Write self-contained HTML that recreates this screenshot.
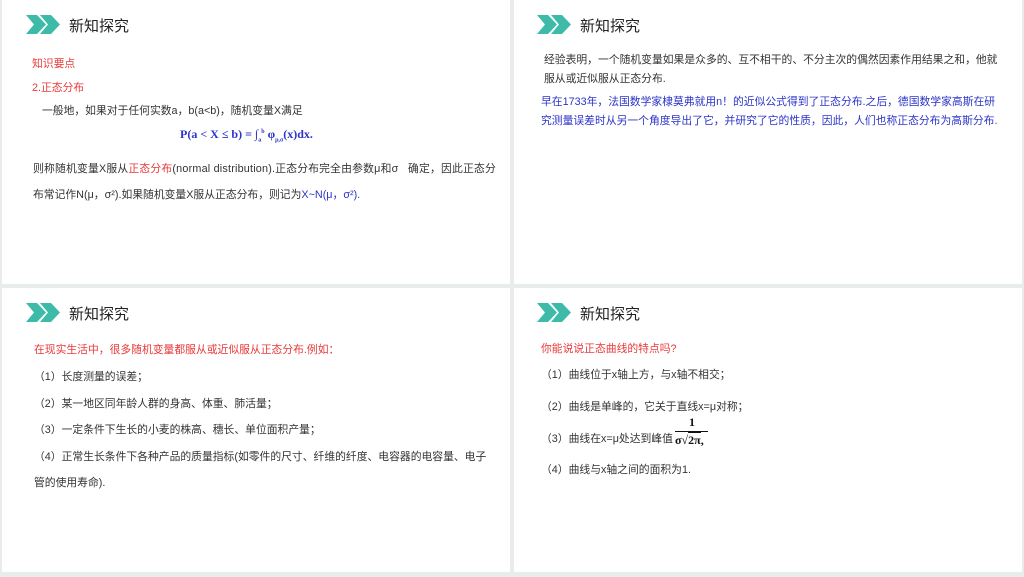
<!DOCTYPE html>
<html><head><meta charset="utf-8"><style>
body{margin:0;width:1024px;height:577px;background:#e9eced;position:relative;overflow:hidden;font-family:"Liberation Sans","Noto Sans CJK SC",sans-serif;}
.p{position:absolute;background:#fff;}
.t{position:absolute;white-space:nowrap;font-size:10.8px;color:#333;}
.h{position:absolute;font-size:15px;color:#222;white-space:nowrap;}
.r{color:#e8393a}.b{color:#2c33c8}
.m{font-family:"Liberation Serif",serif;font-weight:bold;color:#2c33c8;}
svg.c{position:absolute;}
</style></head><body>
<div class="p" style="left:2px;top:0;width:508px;height:284px"></div>
<div class="p" style="left:514px;top:0;width:508px;height:284px"></div>
<div class="p" style="left:2px;top:288px;width:508px;height:284px"></div>
<div class="p" style="left:514px;top:288px;width:508px;height:284px"></div>

<svg class="c" style="left:26px;top:15px" width="34" height="19" viewBox="0 0 34 19"><path d="M0 0H11L20 9.5 11 19H0L8 9.5Z" fill="#3dbba8"/><path d="M14 0H25L34 9.5 25 19H14L22 9.5Z" fill="#3dbba8"/></svg>
<div class="h" style="left:69px;top:15px">新知探究</div>
<svg class="c" style="left:537px;top:15px" width="34" height="19" viewBox="0 0 34 19"><path d="M0 0H11L20 9.5 11 19H0L8 9.5Z" fill="#3dbba8"/><path d="M14 0H25L34 9.5 25 19H14L22 9.5Z" fill="#3dbba8"/></svg>
<div class="h" style="left:580px;top:15px">新知探究</div>
<svg class="c" style="left:26px;top:303px" width="34" height="19" viewBox="0 0 34 19"><path d="M0 0H11L20 9.5 11 19H0L8 9.5Z" fill="#3dbba8"/><path d="M14 0H25L34 9.5 25 19H14L22 9.5Z" fill="#3dbba8"/></svg>
<div class="h" style="left:69px;top:303px">新知探究</div>
<svg class="c" style="left:537px;top:303px" width="34" height="19" viewBox="0 0 34 19"><path d="M0 0H11L20 9.5 11 19H0L8 9.5Z" fill="#3dbba8"/><path d="M14 0H25L34 9.5 25 19H14L22 9.5Z" fill="#3dbba8"/></svg>
<div class="h" style="left:580px;top:303px">新知探究</div>

<div class="t r" style="left:32px;top:55px">知识要点</div>
<div class="t r" style="left:32px;top:79px">2.正态分布</div>
<div class="t" style="left:42px;top:102px">一般地，如果对于任何实数a，b(a&lt;b)，随机变量X满足</div>
<div class="t m" style="left:180px;top:127px;font-size:12px">P(a &lt; X ≤ b) = ∫<sub style="font-size:6px">a</sub><sup style="font-size:6px">b</sup> φ<sub style="font-size:6px">μ,σ</sub>(x)dx.</div>
<div class="t" style="left:33px;top:160px;letter-spacing:0.2px">则称随机变量X服从<span class="r">正态分布</span>(normal distribution).正态分布完全由参数μ和σ&nbsp;&nbsp;&nbsp;确定，因此正态分</div>
<div class="t" style="left:33px;top:186px">布常记作N(μ，σ²).如果随机变量X服从正态分布，则记为<span class="b">X~N(μ，σ²).</span></div>

<div class="t" style="left:544px;top:51px">经验表明，一个随机变量如果是众多的、互不相干的、不分主次的偶然因素作用结果之和，他就</div>
<div class="t" style="left:544px;top:70px">服从或近似服从正态分布.</div>
<div class="t b" style="left:541px;top:93px">早在1733年，法国数学家棣莫弗就用n！的近似公式得到了正态分布.之后，德国数学家高斯在研</div>
<div class="t b" style="left:541px;top:112px">究测量误差时从另一个角度导出了它，并研究了它的性质，因此，人们也称正态分布为高斯分布.</div>

<div class="t r" style="left:34px;top:341px">在现实生活中，很多随机变量都服从或近似服从正态分布.例如：</div>
<div class="t" style="left:34px;top:368px">（1）长度测量的误差；</div>
<div class="t" style="left:34px;top:395px">（2）某一地区同年龄人群的身高、体重、肺活量；</div>
<div class="t" style="left:34px;top:421px">（3）一定条件下生长的小麦的株高、穗长、单位面积产量；</div>
<div class="t" style="left:34px;top:448px">（4）正常生长条件下各种产品的质量指标(如零件的尺寸、纤维的纤度、电容器的电容量、电子</div>
<div class="t" style="left:34px;top:474px">管的使用寿命).</div>

<div class="t r" style="left:541px;top:340px">你能说说正态曲线的特点吗?</div>
<div class="t" style="left:541px;top:366px">（1）曲线位于x轴上方，与x轴不相交；</div>
<div class="t" style="left:541px;top:398px">（2）曲线是单峰的，它关于直线x=μ对称；</div>
<div class="t" style="left:541px;top:430px">（3）曲线在x=μ处达到峰值</div>
<div class="t" style="left:675px;top:415px;font-family:'Liberation Serif',serif;font-weight:bold;font-size:12px;color:#111;text-align:center;width:34px">1</div>
<div style="position:absolute;left:675px;top:431px;width:33px;border-top:1px solid #111"></div>
<div class="t" style="left:675px;top:433px;font-family:'Liberation Serif',serif;font-weight:bold;font-size:12px;color:#111">σ√<span style="border-top:1px solid #111">2π</span>,</div>
<div class="t" style="left:541px;top:461px">（4）曲线与x轴之间的面积为1.</div>
</body></html>
